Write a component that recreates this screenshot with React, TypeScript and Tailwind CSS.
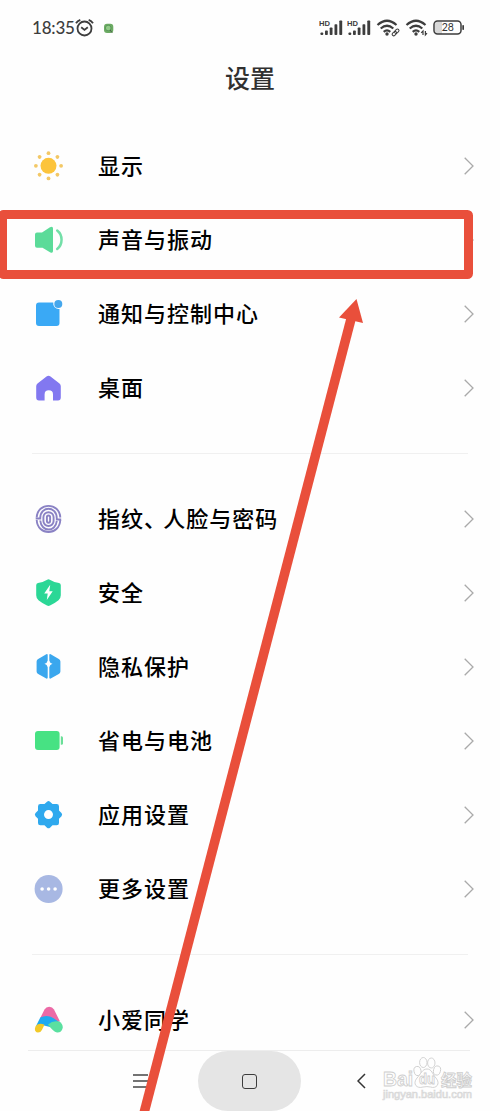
import type { ReactNode } from "react";

type Item = { label: ReactNode; icon: ReactNode };

function Icon({ children }: { children: ReactNode }) {
  return (
    <svg width="30" height="30" viewBox="0 0 30 30" fill="none">
      {children}
    </svg>
  );
}

const sunRays = [0, 45, 90, 135, 180, 225, 270, 315];

const displayItems: Item[] = [
  {
    label: "显示",
    icon: (
      <Icon>
        <circle cx="15.500" cy="14.800" r="8" fill="#fcc43c" />
        {sunRays.map((a) => (
          <circle key={a} cx="15.500" cy="2.200" r="1.900" fill="#f3c866" transform={`rotate(${a} 15.500 14.800)`} />
        ))}
      </Icon>
    ),
  },
  {
    label: "声音与振动",
    icon: (
      <Icon>
        <path
          d="M4 7.500h5L17 2.300Q20 .7 20 3.500v22.500Q20 28.800 17 27.200L9.500 22.800H4Q2 22.800 2 20.800V9.500Q2 7.500 4 7.500z"
          fill="#5bdb99"
        />
        <path d="M24.200 5.500C30 10 30 19.500 24.200 24" stroke="#73dfa8" strokeWidth="2.500" strokeLinecap="round" />
      </Icon>
    ),
  },
  {
    label: "通知与控制中心",
    icon: (
      <Icon>
        <path
          d="M6 3.500H20.300A5.500 5.500 0 0 0 26.500 10V24Q26.500 27 23.500 27H6Q3 27 3 24V6.500Q3 3.500 6 3.500z"
          fill="#3aa9f5"
        />
        <circle cx="25.300" cy="5" r="4" fill="#45a7ed" />
      </Icon>
    ),
  },
  {
    label: "桌面",
    icon: (
      <Icon>
        <path
          d="M13.500 3.500Q15.500 1.900 17.500 3.500L26.500 10.500Q27.800 11.500 27.800 13.300V24.500Q27.800 27.500 25 27.500H20V21.500Q20 17.300 15.800 17.300T11.600 21.500V27.500H6Q3.200 27.500 3.200 24.500V13.300Q3.200 11.500 4.500 10.500z"
          fill="#8278f0"
        />
      </Icon>
    ),
  },
];

const systemItems: Item[] = [
  {
    label: (
      <>
        指纹<span className="tracking-[-2.8px]">、</span>人脸与密码
      </>
    ),
    icon: (
      <Icon>
        <g stroke="#8a82c4" strokeWidth="1.900">
          <path d="M3.700 13.500C4.500 -2 26.500 -2 27.300 13.500M27.300 16C26.500 32 4.500 32 3.700 16" />
          <path d="M2.700 14.500H7.200C7.200 1.500 23.800 1.500 23.800 14.500V15.500H28.200" />
          <path d="M7.200 16.500C8.500 28.500 22.500 28.500 23.800 17" />
          <rect x="10.400" y="8.200" width="10.200" height="13.800" rx="5.100" />
          <rect x="13.900" y="11.500" width="3.200" height="7.200" rx="1.600" />
        </g>
      </Icon>
    ),
  },
  {
    label: "安全",
    icon: (
      <Icon>
        <path
          d="M14.200 1.800Q15.500 .8 16.800 1.800Q21 4.400 26 5.100Q27.800 5.500 27.800 7.300V17.300Q27.800 20.300 25.500 22.300Q21.500 25.500 17 27.600Q15.500 28.300 14 27.600Q9.500 25.500 5.500 22.300Q3.200 20.300 3.200 17.300V7.300Q3.200 5.500 5 5.100Q10 4.400 14.200 1.800z"
          fill="#2bd796"
        />
        <path d="M17.200 6.800L11.200 15.500H14.700L13.800 22L19.700 13.300H16.300z" fill="white" />
      </Icon>
    ),
  },
  {
    label: "隐私保护",
    icon: (
      <Icon>
        <path
          d="M13.300 2.200Q14.700 1.700 14.700 3V8.500Q14.200 11.200 11.500 11.800Q14.200 12.500 14.700 15.200V25.500Q14.700 27 13.300 26.500L5.200 22Q3.600 21.200 3.600 19.500V9.500Q3.600 7.700 5.200 6.900z"
          fill="#3aa7ee"
        />
        <path
          d="M17.700 2.200Q16.300 1.700 16.300 3V8.500Q16.800 11.200 19.500 11.800Q16.800 12.500 16.300 15.200V25.500Q16.300 27 17.700 26.500L25.800 22Q27.400 21.200 27.400 19.500V9.500Q27.400 7.700 25.800 6.900z"
          fill="#3aa7ee"
        />
      </Icon>
    ),
  },
  {
    label: "省电与电池",
    icon: (
      <Icon>
        <rect x="2" y="5" width="24.600" height="19" rx="3" fill="#47e283" />
        <path d="M27.800 10.300h.7q1.500 0 1.500 1.500v5.500q0 1.500-1.500 1.500h-.7z" fill="#6adf98" />
      </Icon>
    ),
  },
  {
    label: "应用设置",
    icon: (
      <Icon>
        <path
          d="M14 1.700Q15.500 .4 17 1.700L19.500 4.100H23.700Q26 4.100 26 6.400V10.500L28.500 13Q29.800 14.600 28.500 16.200L26 18.700V22.900Q26 25.200 23.700 25.200H19.500L17 27.700Q15.500 29 14 27.700L11.500 25.200H7.300Q5 25.200 5 22.900V18.700L2.500 16.200Q1.200 14.600 2.500 13L5 10.500V6.400Q5 4.100 7.300 4.100H11.500z"
          fill="#2fa9ee"
        />
        <circle cx="15.500" cy="14.600" r="4.500" fill="white" />
      </Icon>
    ),
  },
  {
    label: "更多设置",
    icon: (
      <Icon>
        <circle cx="15.600" cy="15" r="14" fill="#a8b8e3" />
        <g fill="white">
          <circle cx="9.100" cy="15" r="1.800" />
          <circle cx="15.600" cy="15" r="1.800" />
          <circle cx="22.100" cy="15" r="1.800" />
        </g>
      </Icon>
    ),
  },
];

const assistantItems: Item[] = [
  {
    label: "小爱同学",
    icon: (
      <Icon>
        <path d="M7 13.500L11.500 4.500Q13 1.700 16.200 1.700T21 4.500L27 16.500L14 17z" fill="#ec6aa6" />
        <path d="M7.300 12.500Q14.500 9 21 13.500L27.500 18L17 22L9 20L3 21z" fill="#1eaaf0" />
        <path d="M2.700 21Q6 17.300 11.500 19.700L8.900 25Q7.700 27.500 5 27.500Q1.600 27.200 1.900 23.500z" fill="#f2c928" />
        <path d="M15 19.500Q20 15 26 16.500Q30.200 18.700 29.700 23Q28.500 27.800 24 27.500Q20 26.500 15 19.500z" fill="#5ae0a0" />
      </Icon>
    ),
  },
];

function SettingsRow({ label, icon }: Item) {
  return (
    <li className="flex h-[74px] items-center pl-[33px] pr-[26px]">
      {icon}
      <span className="ml-[35px] flex-1 whitespace-nowrap pt-[2px] text-[22px] font-medium leading-[30px] tracking-[1px] text-black">
        {label}
      </span>
      <svg width="10" height="18" viewBox="0 0 10 18" fill="none" stroke="#aaa" strokeWidth="1.300">
        <path d="M.7 .7L9 9L.7 17.300" />
      </svg>
    </li>
  );
}

function SettingsGroup({ items }: { items: Item[] }) {
  return (
    <ul>
      {items.map((item, idx) => (
        <SettingsRow key={idx} {...item} />
      ))}
    </ul>
  );
}

function Divider() {
  return <div className="mx-8 mt-[28px] mb-[28px] h-px bg-[#f0f0f0]" />;
}

function Signal() {
  return (
    <svg width="24" height="18" viewBox="0 0 24 18" fill="#3d3d3d">
      <text x="0" y="6.500" fontSize="7" fontWeight="700" textLength="11" lengthAdjust="spacingAndGlyphs">
        HD
      </text>
      <rect x="1.500" y="13.500" width="2.700" height="2.500" rx=".8" />
      <rect x="6" y="11.500" width="2.800" height="4.500" rx=".8" />
      <rect x="10.700" y="8.500" width="2.800" height="7.500" rx=".8" />
      <rect x="15.500" y="5.300" width="2.800" height="10.700" rx=".8" />
      <rect x="20.300" y="1.500" width="2.900" height="14.500" rx=".8" />
    </svg>
  );
}

function Wifi({ children }: { children: ReactNode }) {
  return (
    <svg width="25" height="18" viewBox="0 0 25 18" fill="none" stroke="#3d3d3d">
      <path d="M1.500 6Q11 -2.500 20.500 6M4.700 9.500Q11 4 17.300 9.500M7.700 12.800Q11 10 14.300 12.800" strokeWidth="2.200" />
      <circle cx="11" cy="15" r="1.700" fill="#3d3d3d" stroke="none" />
      {children}
    </svg>
  );
}

function StatusBar() {
  return (
    <header className="flex h-14 items-center pl-8 pr-[35px]">
      <span className="w-[42px] whitespace-nowrap font-[Lato] text-[17px] font-medium leading-5 tracking-[-0.2px] text-[#3d3d3d]">18:35</span>
      <svg className="ml-px" width="19" height="20" viewBox="0 0 19 20" fill="none" stroke="#3d3d3d" strokeWidth="1.800">
        <circle cx="9.500" cy="10.500" r="7" />
        <path d="M1 5.300Q2.500 2.800 5.300 1.800M13.700 1.800Q16.500 2.800 18 5.300M6.200 9.200L9.500 11.900L12.800 9.200" />
      </svg>
      <svg className="ml-[9px]" width="11" height="11" viewBox="0 0 11 11">
        <rect x="1" y=".8" width="9.300" height="9.300" rx="3" fill="#6cab63" />
        <circle cx="5.200" cy="5" r="2.800" fill="#91ca87" stroke="#4a8a4e" strokeWidth=".7" />
        <path d="M7 7L9.300 9.800" stroke="#49604a" />
      </svg>
      <div className="flex flex-1 items-center justify-end">
        <Signal />
        <div className="ml-[4px]">
          <Signal />
        </div>
        <div className="ml-[5px]">
          <Wifi>
            <g strokeWidth="1" transform="rotate(-45 19.500 13.500)">
              <rect x="15.500" y="12" width="5" height="3" rx="1.500" />
              <rect x="18.800" y="12" width="5" height="3" rx="1.500" />
            </g>
          </Wifi>
        </div>
        <div className="ml-[4px]">
          <Wifi>
            <path d="M18 16V12L16.200 13.800M20.400 12V16L22 14.200" strokeWidth="1.200" />
          </Wifi>
        </div>
        <svg className="ml-[3px]" width="32" height="16" viewBox="0 0 32 16">
          <path d="M4 2H9V14H4Q2 14 2 12V4Q2 2 4 2z" fill="#d8d8d8" />
          <rect x="1" y="1" width="27" height="13" rx="3.500" fill="none" stroke="#3d3d3d" strokeWidth="1.500" />
          <rect x="29.300" y="5" width="1.700" height="5" rx=".8" fill="#3d3d3d" />
          <text x="14.800" y="11.300" textAnchor="middle" fontSize="10.500" fontFamily="Lato" fill="#333">
            28
          </text>
        </svg>
      </div>
    </header>
  );
}

function Watermark() {
  return (
    <svg className="absolute bottom-0 right-6 h-[58px] w-[96px]" viewBox="0 0 96 58" fill="#fefefe" stroke="#cecece" strokeWidth=".9">
      <text
        x="3"
        y="33"
        fontSize="21"
        fontFamily="Liberation Sans"
        fontWeight="700"
        textLength="30"
        lengthAdjust="spacingAndGlyphs"
      >
        Bai
      </text>
      <ellipse cx="37.500" cy="18" rx="3.500" ry="4.600" transform="rotate(-12 37.500 18)" />
      <ellipse cx="43.300" cy="9.500" rx="3.700" ry="5" />
      <ellipse cx="51.300" cy="10" rx="3.700" ry="5" />
      <ellipse cx="57" cy="17.500" rx="3.500" ry="4.600" transform="rotate(15 57 17.500)" />
      <path d="M47 16C52 16 52 21 56 25C61 31 56 36 50.500 34Q47 33.200 43 34C37 36 32 31 37 25C41 21 42 16 47 16z" />
      <text
        x="39"
        y="31"
        fontSize="14"
        fontFamily="Liberation Sans"
        fontWeight="700"
        strokeWidth=".8"
        textLength="16"
        lengthAdjust="spacingAndGlyphs"
      >
        du
      </text>
      <text x="61" y="32.500" fontSize="16" fontWeight="700" fontFamily="Noto Sans CJK SC" textLength="31" lengthAdjust="spacingAndGlyphs">
        经验
      </text>
      <text
        x="3"
        y="45"
        fontSize="10"
        fontFamily="Liberation Sans"
        stroke="#d8d8d8"
        strokeWidth=".7"
        textLength="89"
        lengthAdjust="spacingAndGlyphs"
      >
        jingyan.baidu.com
      </text>
    </svg>
  );
}

function NavBar() {
  return (
    <nav className="relative flex h-[60px] items-center">
      <svg className="ml-[133px]" width="15" height="14" viewBox="0 0 15 14" stroke="#454545" strokeWidth="1.300">
        <path d="M0 1H15M0 7H15M0 13H15" />
      </svg>
      <div className="ml-[50px] flex h-[60px] w-[103px] items-center justify-center rounded-full bg-[#e5e5e5]">
        <div className="h-[15px] w-[15px] rounded-[3px] border-[1.500px] border-[#3c3c3c]" />
      </div>
      <svg className="ml-14" width="9" height="16" viewBox="0 0 9 16" fill="none" stroke="#333" strokeWidth="1.500">
        <path d="M8 1L1 8L8 15" />
      </svg>
      <Watermark />
    </nav>
  );
}

// Red frame round the sound row and the arrow that points up at it
function Annotation() {
  return (
    <svg className="pointer-events-none absolute inset-0" width="500" height="1111" viewBox="0 0 500 1111">
      <rect x="2.500" y="214.500" width="466" height="60" rx="1" fill="none" stroke="#e94f3b" strokeWidth="9" strokeLinejoin="round" />
      <path d="M144 1113L351 319" stroke="#e94f3b" strokeWidth="9.500" />
      <path d="M356.500 299L363 323L339 317.500z" fill="#e94f3b" />
    </svg>
  );
}

export default function App() {
  return (
    <div className="relative h-[1111px] w-[500px] overflow-hidden bg-[#fefefe] font-['Liberation_Sans','Noto_Sans_CJK_SC',sans-serif]">
      <StatusBar />
      <h1 className="h-[73px] pt-[5px] text-center text-[25px] font-medium leading-[36px] text-[#303030]">设置</h1>
      <main className="h-[922px]">
        <SettingsGroup items={displayItems} />
        <Divider />
        <SettingsGroup items={systemItems} />
        <Divider />
        <SettingsGroup items={assistantItems} />
      </main>
      <div className="-mt-px ml-7 mr-[30px] h-px bg-[#ededed]" />
      <NavBar />
      <Annotation />
    </div>
  );
}
